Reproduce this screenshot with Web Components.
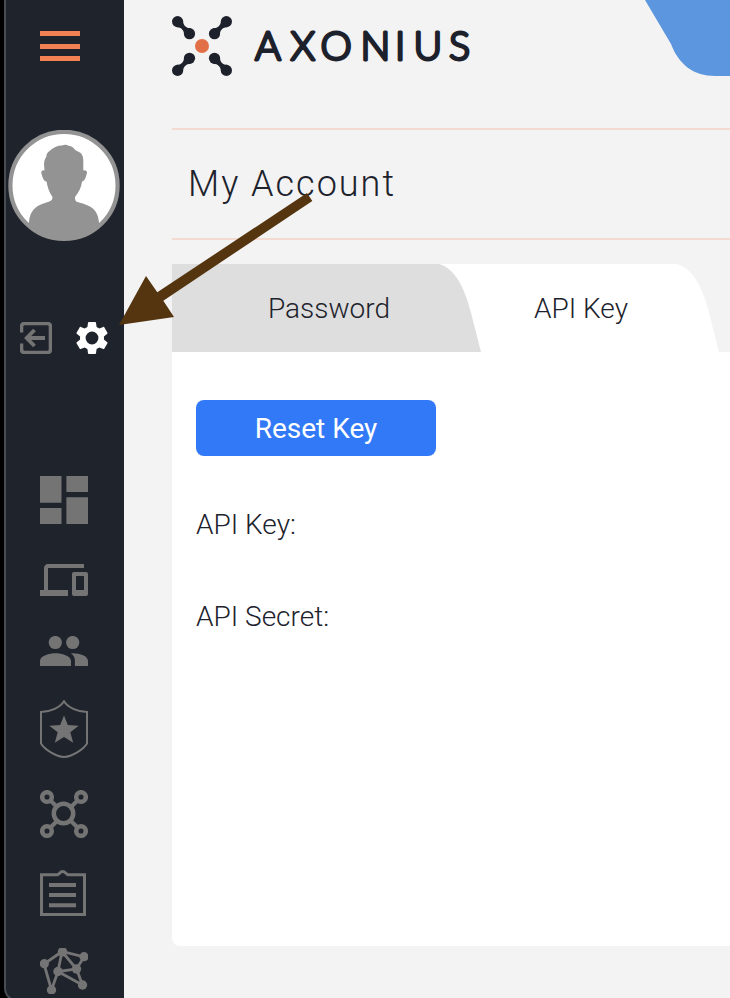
<!DOCTYPE html>
<html lang="en">
<head>
<meta charset="utf-8">
<title>Axonius - My Account</title>
<style>
html,body{margin:0;height:998px;overflow:hidden;background:#f3f3f3}
</style>
</head>
<body>
<ax-app></ax-app>
<script>
function define(name, markup) {
  customElements.define(name, class extends HTMLElement {
    constructor() {
      super();
      this.attachShadow({ mode: "open" }).innerHTML = markup;
    }
  });
}

const icons = {
  logout: [32, 32, "0 0 32 32", '<path d="M1.500 10.500V4.500a3 3 0 0 1 3-3h23a3 3 0 0 1 3 3v23a3 3 0 0 1-3 3h-23a3 3 0 0 1-3-3V21.500" fill="none" stroke="currentColor" stroke-width="3.600"/><path d="M25 16H7M14.500 8 6.700 16l7.800 8" fill="none" stroke="currentColor" stroke-width="3.800"/>'],
  settings: [32, 32, "2 2 20 20", '<path fill="currentColor" d="M19.430 12.980c.04-.32.07-.64.07-.98s-.03-.66-.07-.98l2.110-1.650c.19-.15.24-.42.12-.64l-2-3.460c-.12-.22-.39-.3-.61-.22l-2.490 1c-.52-.4-1.080-.73-1.690-.98l-.38-2.650C14.460 2.180 14.250 2 14 2h-4c-.25 0-.46.18-.49.42l-.38 2.650c-.61.25-1.170.59-1.690.98l-2.490-1c-.23-.09-.49 0-.61.22l-2 3.460c-.13.22-.07.49.12.64l2.110 1.650c-.04.32-.07.65-.07.98s.03.66.07.98l-2.110 1.650c-.19.15-.24.42-.12.64l2 3.460c.12.22.39.3.61.22l2.490-1c.52.4 1.080.73 1.690.98l.38 2.650c.03.24.24.42.49.42h4c.25 0 .46-.18.49-.42l.38-2.650c.61-.25 1.170-.59 1.690-.98l2.490 1c.23.09.49 0 .61-.22l2-3.460c.12-.22.07-.49-.12-.64l-2.110-1.650zM12 16a4 4 0 1 1 0-8 4 4 0 0 1 0 8z"/>'],
  dashboard: [48, 48, "0 0 48 48", '<path fill="currentColor" d="M0 0h21.500v26.800H0zM26.400 0H48v16H26.400zM0 32h21.500v16H0zM26.400 21.200H48V48H26.400z"/>'],
  devices: [48, 32, "0 4 24 16", '<path fill="currentColor" d="M4 6h18V4H4c-1.100 0-2 .9-2 2v11H0v3h14v-3H4V6zm19 2h-6c-.55 0-1 .45-1 1v10c0 .55.45 1 1 1h6c.55 0 1-.45 1-1V9c0-.55-.45-1-1-1zm-1 9h-4v-7h4v7z"/>'],
  users: [48, 30, "0 0 48 30", '<g fill="currentColor"><circle cx="15.300" cy="6.500" r="6.600"/><circle cx="32.700" cy="6.500" r="6.600"/><path d="M0 30v-5c0-5.300 9.500-7.800 15.500-7.800S31 19.700 31 25v5zM30.800 17.300c3.200 2 4.100 4.700 4.100 7.700v5H48v-5c0-5.400-9-8.200-17.200-7.700z"/></g>'],
  shield: [48, 58, "0 0 48 58", '<path d="M24 1.200C20 7.500 11 11.700 1 12v31.500C4.500 49.500 16 56.600 24 57c8-.4 19.500-7.500 23-13.500V12C37 11.700 28 7.500 24 1.200z" fill="none" stroke="currentColor" stroke-width="2"/><path fill="currentColor" d="m24 15.500 3.800 9.500 10.900.7-8.400 6.600 2.900 10.500-9.200-5.700-9.200 5.700 2.900-10.500-8.400-6.600 10.900-.7z"/>'],
  adapters: [48, 48, "0 0 48 48", '<g fill="none" stroke="currentColor" stroke-width="4.500"><path stroke-width="4" d="m10 10 7 7M38 10l-7 7M10 38l7-7M38 38l-7-7"/><circle cx="23.500" cy="23.500" r="9.700"/><circle cx="7" cy="7" r="4.800"/><circle cx="41" cy="7" r="4.800"/><circle cx="7" cy="41" r="4.800"/><circle cx="41" cy="41" r="4.800"/></g>'],
  reports: [46, 46, "0 0 46 46", '<g fill="none" stroke="currentColor"><path stroke-width="3" d="M1.500 4.700H17.500C19.500 4.300 20 1.600 22.700 1.600S26 4.300 28 4.700H44.500V44.500H1.500z"/><path stroke-width="4" d="M9 15h27M9 25h27M9 35.300h27"/></g>'],
  graph: [48, 46, "0 0 48 46", '<path fill="none" stroke="currentColor" stroke-width="2.800" d="M22 3.500 4 16l7.500 26L18 23.500 22 3.500l22 5.500-7.500 12L18 23.500 42.500 37l-6-16L22 3.500"/><g fill="currentColor"><circle cx="22.500" cy="3.800" r="4.800"/><circle cx="4.300" cy="15.700" r="4.600"/><circle cx="44" cy="8.700" r="4.600"/><circle cx="18" cy="23.500" r="4.700"/><circle cx="36.500" cy="21" r="4.700"/><circle cx="42.500" cy="37" r="4.700"/><circle cx="11.500" cy="42" r="4.700"/></g>']
};

customElements.define("ax-icon", class extends HTMLElement {
  connectedCallback() {
    const [w, h, box, body] = icons[this.getAttribute("name")];
    this.attachShadow({ mode: "open" }).innerHTML =
      `<style>:host{display:block;flex:none;color:#747474}:host([active]){color:#fff}svg{display:block}</style>
       <svg width="${w}" height="${h}" viewBox="${box}">${body}</svg>`;
  }
});

define("ax-avatar", `
<style>:host{display:block;width:112px;height:112px}svg{display:block}</style>
<svg width="112" height="112" viewBox="0 .6 112 112">
  <defs><clipPath id="c"><circle cx="56" cy="56" r="54"/></clipPath></defs>
  <circle cx="56" cy="56" r="53.800" fill="#fff"/>
  <path clip-path="url(#c)" fill="#939393" d="M54 16c2-.8 5-.8 6.500.3 2 0 4 1.200 5 2.400 1.300 1.800 3 3 4.500 3.300 4.500 1.500 5.500 6 5.300 10.500V41c1.500-.5 4 .3 3.700 2.500-1 3.500-2 8-5 8.500-.5 6-3.500 11-7 15.500 0 3 .5 4.500 2.500 5C82 76 90 79 91 93v19H21V93c1-14 9-17.500 19-20.500 3-1 4.500-2 4.500-5-3.500-5-5-10-6-15.500-3 0-4-4.500-5.200-8.500-.3-2 1.200-3 3.200-2.500l-.5-6c0-3 .8-6 2.500-8-.5-2 1-4 3-5.500 3.500-3.500 8-5.500 12.500-5.500z"/>
  <circle cx="56" cy="56" r="53.600" fill="none" stroke="#939393" stroke-width="4.200"/>
</svg>`);

define("ax-sidebar", `
<style>
:host{display:block;flex:none;width:124px;height:998px;background:#000;overflow:hidden}
.rail{box-sizing:border-box;height:1002px;margin-left:4px;border-left:2px solid #494c53;border-bottom:2px solid #494c53;border-bottom-left-radius:14px;background:#1f232c;display:flex;flex-direction:column;align-items:center;padding:31px 4px 0 0}
.menu{display:flex;flex-direction:column;gap:7.500px;width:40px;margin-right:6px}
.menu i{display:block;height:5px;background:#f28253}
ax-avatar{margin:69px 0 80px 2px}
.actions{display:flex;gap:24px;margin:0 0 122px 2px}
nav{display:flex;flex-direction:column;width:48px;margin-left:2px}
.g40{margin-bottom:40px}.g34{margin-bottom:34px}.g32{margin-bottom:32px}
</style>
<div class="rail">
  <div class="menu"><i></i><i></i><i></i></div>
  <ax-avatar></ax-avatar>
  <div class="actions"><ax-icon name="logout"></ax-icon><ax-icon name="settings" active></ax-icon></div>
  <nav>
    <ax-icon class="g40" name="dashboard"></ax-icon>
    <ax-icon class="g40" name="devices"></ax-icon>
    <ax-icon class="g34" name="users"></ax-icon>
    <ax-icon class="g32" name="shield"></ax-icon>
    <ax-icon class="g32" name="adapters"></ax-icon>
    <ax-icon class="g32" name="reports"></ax-icon>
    <ax-icon name="graph"></ax-icon>
  </nav>
</div>`);

define("ax-logo", `
<style>:host{display:block}svg{display:block}text{font:300 39.500px Lato,"Open Sans",sans-serif;fill:#1d212b;stroke:#1d212b;stroke-width:2.900;stroke-linejoin:round}</style>
<svg width="320" height="60" viewBox="0 0 320 60">
  <defs><g id="d"><circle cx="5.600" cy="5.600" r="5.600"/><circle cx="17.500" cy="17.700" r="5.600"/><path d="M10.900 4C11 9.500 14.500 12.500 19 12.300L12.200 19.500C12.300 14.500 9.500 11 4 11z"/></g></defs>
  <g fill="#1d212b"><use href="#d"/><use href="#d" transform="matrix(-1 0 0 1 60 0)"/><use href="#d" transform="matrix(1 0 0 -1 0 60)"/><use href="#d" transform="matrix(-1 0 0 -1 60 60)"/></g>
  <circle cx="30" cy="30" r="7" fill="#e27046"/>
  <text y="43.500" x="83 118.500 148.500 188.500 223 241.500 277">AXONIUS</text>
</svg>`);

define("ax-tab", `
<style>
:host{display:block;position:relative;flex:none;width:309px;height:88px;color:#dedede}
:host([active]){color:#fff;margin-left:-71px}
svg{display:block;position:absolute;inset:0}
span{position:relative;display:block;box-sizing:border-box;padding-left:96px;color:#1d222c;line-height:90px}
:host([active]) span{padding-left:124px}
</style>
<svg width="309" height="88" viewBox="0 0 309 88"><path fill="currentColor" d="M0 0H267C283 4 293 25 298.500 47L309 88H0z"/></svg>
<span><slot></slot></span>`);

define("ax-button", `
<style>:host{display:block;width:240px;height:56px;border-radius:8px;background:#3179f7;color:#fff;text-align:center;font-weight:400;line-height:58px}</style>
<slot></slot>`);

define("ax-arrow", `
<style>:host{position:absolute;z-index:5;left:110px;top:180px;pointer-events:none}svg{display:block}</style>
<svg width="220" height="160" viewBox="110 180 220 160"><path fill="#54350f" d="M119 325 146 276 157.300 292.300 307 193 312.300 201 163.300 300.700 174 317z"/></svg>`);

define("ax-page", `
<style>
:host{display:block;flex:1;min-width:0;padding:16px 0 0 48px;height:982px}
h1{margin:52px 0 24px;box-sizing:border-box;height:112px;border:solid #f4dbd1;border-width:2px 0;padding-left:16px;font-size:36px;font-weight:300;letter-spacing:2px;line-height:108px}
.tabs{display:flex}
.tabs ax-tab:first-child{z-index:1}
.panel{box-sizing:border-box;height:594px;background:#fff;border-radius:0 0 0 8px;padding:48px 24px}
p{margin:0;height:92px;line-height:42px}
ax-button{margin-bottom:48px}
.blob{position:absolute;right:0;top:0}
</style>
<svg class="blob" width="90" height="76" viewBox="0 0 90 76"><path fill="#5c96df" d="M5 0 31 44C39 65 54 76 75 76H90V0z"/></svg>
<ax-logo></ax-logo>
<h1>My Account</h1>
<div class="tabs"><ax-tab>Password</ax-tab><ax-tab active>API Key</ax-tab></div>
<div class="panel">
  <ax-button>Reset Key</ax-button>
  <p>API Key:</p>
  <p>API Secret:</p>
</div>`);

define("ax-app", `
<style>:host{position:relative;display:flex;width:730px;height:998px;overflow:hidden;background:#f3f3f3;color:#1d222c;font:300 28px Roboto,sans-serif}</style>
<ax-sidebar></ax-sidebar>
<ax-page></ax-page>
<ax-arrow></ax-arrow>`);
</script>
</body>
</html>
